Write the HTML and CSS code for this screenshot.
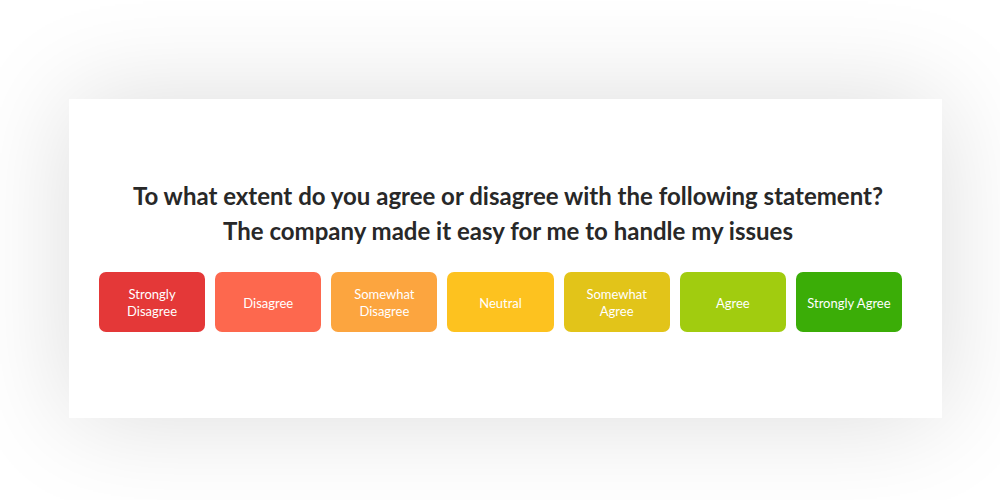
FILE: index.html
```html
<!DOCTYPE html>
<html>

<head>
    <title>Survey Question</title>
    <link rel="stylesheet" href="styles.css">
</head>

<body>
    <div id="survey-card">
        <h1 class="question">
            To what extent do you agree or disagree with the following statement?<br>
            The company made it easy for me to handle my issues
        </h1>

        <div class="scale">
            <button class="choice strongly-disagree">Strongly<br>Disagree</button>
            <button class="choice disagree">Disagree</button>
            <button class="choice somewhat-disagree">Somewhat<br>Disagree</button>
            <button class="choice neutral">Neutral</button>
            <button class="choice somewhat-agree">Somewhat<br>Agree</button>
            <button class="choice agree">Agree</button>
            <button class="choice strongly-agree">Strongly Agree</button>
        </div>
    </div>
</body>

</html>
```

FILE: styles.css
```css
html {
    height: 100%;
}

body {
    min-height: 100%;
    margin: 0;
    padding-top: 99px;
    box-sizing: border-box;
    background-color: #ffffff;
    font-family: Lato, "Liberation Sans", sans-serif;
}

#survey-card {
    width: 873px;
    height: 319px;
    margin-left: 69px;
    padding: 79px 40px 0 30px;
    box-sizing: border-box;
    background-color: #ffffff;
    box-shadow: 0 0 100px rgba(0, 0, 0, 0.14);
}

.question {
    margin: 0 0 24px 0;
    font-size: 24px;
    line-height: 35px;
    font-weight: bold;
    color: #282828;
    text-align: center;
    padding-left: 15px;
}

.scale {
    display: flex;
    gap: 10px;
}

.choice {
    flex: 1;
    height: 60px;
    padding: 2px 0 0 0;
    border: none;
    border-radius: 7px;
    font-family: Lato, "Liberation Sans", sans-serif;
    font-size: 13px;
    line-height: 17px;
    color: #ffffff;
    cursor: pointer;
}

.strongly-disagree { background-color: #e43838; }
.disagree { background-color: #fd684e; }
.somewhat-disagree { background-color: #fca53f; }
.neutral { background-color: #fdc21f; }
.somewhat-agree { background-color: #e2c419; }
.agree { background-color: #a1cc0f; }
.strongly-agree { background-color: #3bad07; }
```
